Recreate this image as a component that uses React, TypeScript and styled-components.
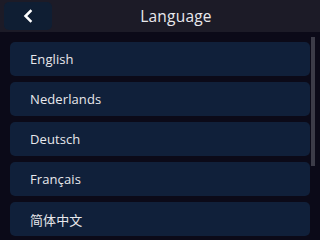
import React from "react";
import styled, { createGlobalStyle } from "styled-components";

const GlobalStyle = createGlobalStyle`
  html, body {
    margin: 0;
    padding: 0;
    width: 320px;
    height: 240px;
    overflow: hidden;
    background: #0b0a18;
  }
`;

const Screen = styled.div`
  width: 320px;
  height: 240px;
  display: flex;
  flex-direction: column;
  background: #0b0a18;
  font-family: "Open Sans", "Noto Sans CJK SC", sans-serif;
  color: #e8e8ec;
`;

const Header = styled.header`
  height: 32px;
  flex: none;
  display: flex;
  align-items: center;
  padding: 0 20px 0 4px;
  box-sizing: border-box;
  background: #1c1b27;
`;

const BackButton = styled.button`
  width: 48px;
  height: 28px;
  border: none;
  border-radius: 5px;
  background: #0f1e33;
  display: flex;
  align-items: center;
  justify-content: center;
  padding: 0;
  cursor: pointer;
`;

const Title = styled.h1`
  flex: 1;
  margin: 0;
  text-align: center;
  font-size: 15.5px;
  font-weight: 400;
  letter-spacing: 0.2px;
  color: #e8e8ec;
`;

const ListArea = styled.div`
  position: relative;
  flex: 1;
  min-height: 0;
  margin-top: 5px;
`;

const List = styled.div`
  height: 100%;
  box-sizing: border-box;
  padding: 5px 10px 0 10px;
  overflow: hidden;
  display: flex;
  flex-direction: column;
  gap: 6px;
`;

const ScrollThumb = styled.div`
  position: absolute;
  top: 0;
  right: 5px;
  width: 4px;
  height: 129px;
  background: #3c3c48;
`;

const Row = styled.div`
  flex: none;
  height: 34px;
  display: flex;
  align-items: center;
  padding-left: 20px;
  border-radius: 5px;
  background: #10203a;
  font-size: 13px;
  letter-spacing: 0.1px;
  color: #e8e8ec;
`;

const languages = [
  "English",
  "Nederlands",
  "Deutsch",
  "Français",
  "简体中文",
  "繁體中文",
  "Español",
  "日本語",
];

function App() {
  return (
    <>
      <GlobalStyle />
      <Screen>
        <Header>
          <BackButton aria-label="Back">
            <svg width="14" height="14" viewBox="0 0 14 14">
              <path
                d="M9.5 2 L4.5 7 L9.5 12"
                fill="none"
                stroke="#ffffff"
                strokeWidth="2.5"
                strokeLinecap="square"
              />
            </svg>
          </BackButton>
          <Title>Language</Title>
        </Header>
        <ListArea>
          <List>
            {languages.map((lang) => (
              <Row key={lang}>{lang}</Row>
            ))}
          </List>
          <ScrollThumb />
        </ListArea>
      </Screen>
    </>
  );
}

export default App;
